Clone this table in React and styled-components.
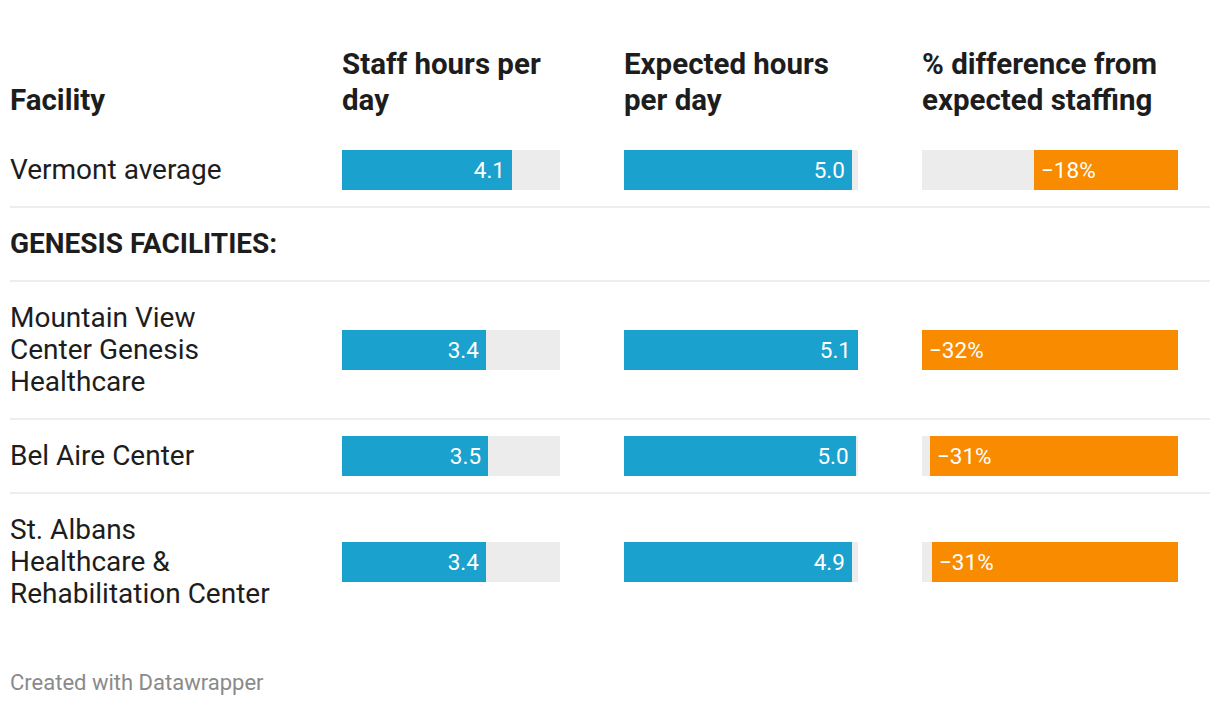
import React from 'react';
import styled, { createGlobalStyle } from 'styled-components';

const GlobalStyle = createGlobalStyle`
  body {
    margin: 0;
    background: #fff;
    font-family: Roboto, "Liberation Sans", sans-serif;
    color: #1d1d1d;
  }
`;

const rows = [
  {
    name: 'Vermont average',
    staff: { value: '4.1', fill: 78 },
    expected: { value: '5.0', fill: 97.4 },
    diff: { value: '−18%', fill: 56.25 },
  },
  { section: 'GENESIS FACILITIES:' },
  {
    name: 'Mountain View Center Genesis Healthcare',
    staff: { value: '3.4', fill: 66 },
    expected: { value: '5.1', fill: 100 },
    diff: { value: '−32%', fill: 100 },
  },
  {
    name: 'Bel Aire Center',
    staff: { value: '3.5', fill: 67 },
    expected: { value: '5.0', fill: 99 },
    diff: { value: '−31%', fill: 96.9 },
  },
  {
    name: 'St. Albans Healthcare & Rehabilitation Center',
    staff: { value: '3.4', fill: 66 },
    expected: { value: '4.9', fill: 97.4 },
    diff: { value: '−31%', fill: 96.1 },
  },
];

export default function App() {
  return (
    <>
      <GlobalStyle />
      <Chart>
        <Table>
          <HeadRow>
            <HeadCell>Facility</HeadCell>
            <HeadCell>Staff hours per day</HeadCell>
            <HeadCell>Expected hours per day</HeadCell>
            <HeadCell>% difference from expected staffing</HeadCell>
          </HeadRow>
          {rows.map((row, i) =>
            row.section ? (
              <Row key={i}>
                <SectionCell>{row.section}</SectionCell>
              </Row>
            ) : (
              <Row key={i} last={i === rows.length - 1}>
                <NameCell>{row.name}</NameCell>
                <BarCell>
                  <Track width={218}>
                    <Fill color="#1aa1ce" style={{ width: `${row.staff.fill}%` }}>
                      <Value>{row.staff.value}</Value>
                    </Fill>
                  </Track>
                </BarCell>
                <BarCell>
                  <Track width={234}>
                    <Fill color="#1aa1ce" style={{ width: `${row.expected.fill}%` }}>
                      <Value>{row.expected.value}</Value>
                    </Fill>
                  </Track>
                </BarCell>
                <BarCell>
                  <Track width={256} reverse>
                    <Fill color="#f98b00" left style={{ width: `${row.diff.fill}%` }}>
                      <Value>{row.diff.value}</Value>
                    </Fill>
                  </Track>
                </BarCell>
              </Row>
            )
          )}
        </Table>
        <Footer>Created with Datawrapper</Footer>
      </Chart>
    </>
  );
}

const Chart = styled.div`
  padding: 46px 10px 0 10px;
  width: 1200px;
`;

const Table = styled.div`
  display: flex;
  flex-direction: column;
`;

const grid = `
  display: grid;
  grid-template-columns: 332px 282px 298px 288px;
`;

const HeadRow = styled.div`
  ${grid}
  align-items: end;
  padding-bottom: 16px;
`;

const HeadCell = styled.div`
  max-width: 244px;
  font-size: 29.5px;
  font-weight: 700;
  line-height: 36px;
`;

const Row = styled.div`
  ${grid}
  align-items: center;
  padding: 20px 0;
  border-bottom: ${(p) => (p.last ? 'none' : '2px solid #eeeeee')};
`;

const NameCell = styled.div`
  max-width: 261px;
  font-size: 28px;
  line-height: 32px;
`;

const SectionCell = styled(NameCell)`
  max-width: none;
  font-weight: 700;
  grid-column: 1 / -1;
`;

const BarCell = styled.div`
  display: flex;
  align-items: center;
  height: 32px;
`;

const Track = styled.div`
  width: ${(p) => p.width}px;
  height: 40px;
  flex-shrink: 0;
  background: #ececec;
  display: flex;
  justify-content: ${(p) => (p.reverse ? 'flex-end' : 'flex-start')};
`;

const Fill = styled.div`
  height: 100%;
  background: ${(p) => p.color};
  display: flex;
  align-items: center;
  justify-content: ${(p) => (p.left ? 'flex-start' : 'flex-end')};
  padding: 0 7px;
  box-sizing: border-box;
`;

const Value = styled.span`
  color: #fff;
  font-size: 22.5px;
  line-height: 1;
`;

const Footer = styled.div`
  margin-top: 40px;
  font-size: 22px;
  line-height: 26px;
  color: #8a8a8a;
`;
